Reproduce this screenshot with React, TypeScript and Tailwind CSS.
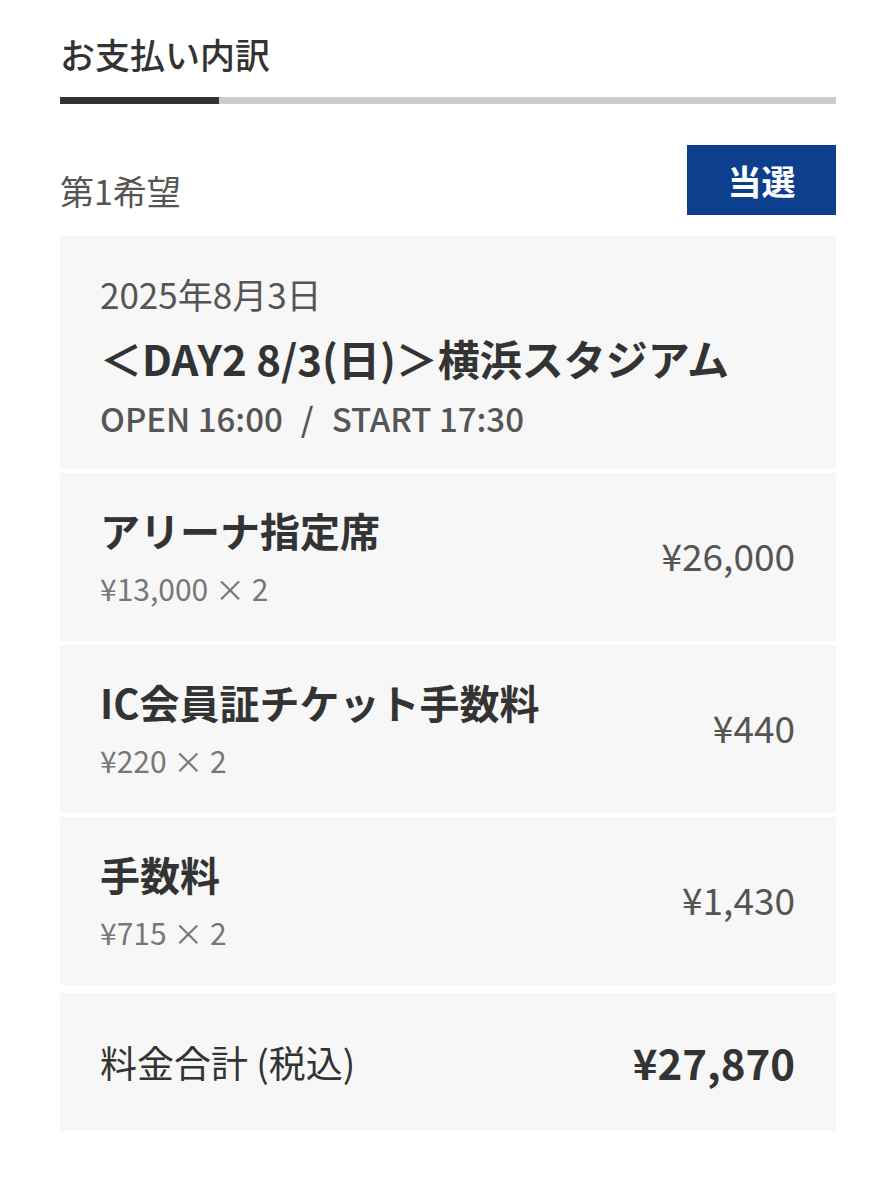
import React from "react";

const font = { fontFamily: '"Noto Sans CJK JP", "Noto Sans", sans-serif' };

function Row({ name, sub, price }: { name: string; sub: string; price: string }) {
  return (
    <div className="flex items-center justify-between bg-[#f7f7f7] pl-[40px] pr-[41px] h-[168px]">
      <div className="flex flex-col">
        <div className="text-[40px] font-bold text-[#333] leading-[48px]">{name}</div>
        <div className="text-[30px] text-[#777] leading-[40px] mt-[14px]">{sub}</div>
      </div>
      <div className="text-[37px] text-[#555] leading-[48px] -mt-[4px]">{price}</div>
    </div>
  );
}

export default function App() {
  return (
    <div className="bg-white w-[896px] h-[1200px] px-[60px] pt-[30px]" style={font}>
      <div className="text-[35px] text-[#333] leading-[48px] font-medium">お支払い内訳</div>
      <div className="flex mt-[19px] h-[7px]">
        <div className="w-[159px] bg-[#333]" />
        <div className="flex-1 bg-[#cccccc]" />
      </div>
      <div className="flex items-center justify-between mt-[41px]">
        <div className="text-[34px] text-[#555] leading-[48px] mt-[22px]">第1希望</div>
        <div className="w-[149px] h-[70px] bg-[#0c3f8e] text-white text-[34px] font-bold flex items-center justify-center">
          当選
        </div>
      </div>
      <div className="mt-[21px] flex flex-col gap-[4px]">
        <div className="bg-[#f7f7f7] h-[233px] pl-[40px] pt-[34px] flex flex-col">
          <div className="text-[35px] text-[#555] leading-[48px]">2025年8月3日</div>
          <div className="text-[42px] font-bold text-[#333] leading-[52px] mt-[14px]">＜DAY2 8/3(日)＞横浜スタジアム</div>
          <div className="text-[33px] font-medium text-[#555] leading-[44px] mt-[12px] flex">
            <span>OPEN 16:00</span>
            <span className="px-[18px]">/</span>
            <span>START 17:30</span>
          </div>
        </div>
        <Row name="アリーナ指定席" sub="¥13,000 × 2" price="¥26,000" />
        <Row name="IC会員証チケット手数料" sub="¥220 × 2" price="¥440" />
        <Row name="手数料" sub="¥715 × 2" price="¥1,430" />
        <div className="mt-[4px] bg-[#f7f7f7] h-[138px] flex items-center justify-between pl-[40px] pr-[41px]">
          <div className="text-[37px] text-[#333] leading-[48px]">料金合計 (税込)</div>
          <div className="text-[42px] font-bold text-[#333] leading-[56px]">¥27,870</div>
        </div>
      </div>
    </div>
  );
}
